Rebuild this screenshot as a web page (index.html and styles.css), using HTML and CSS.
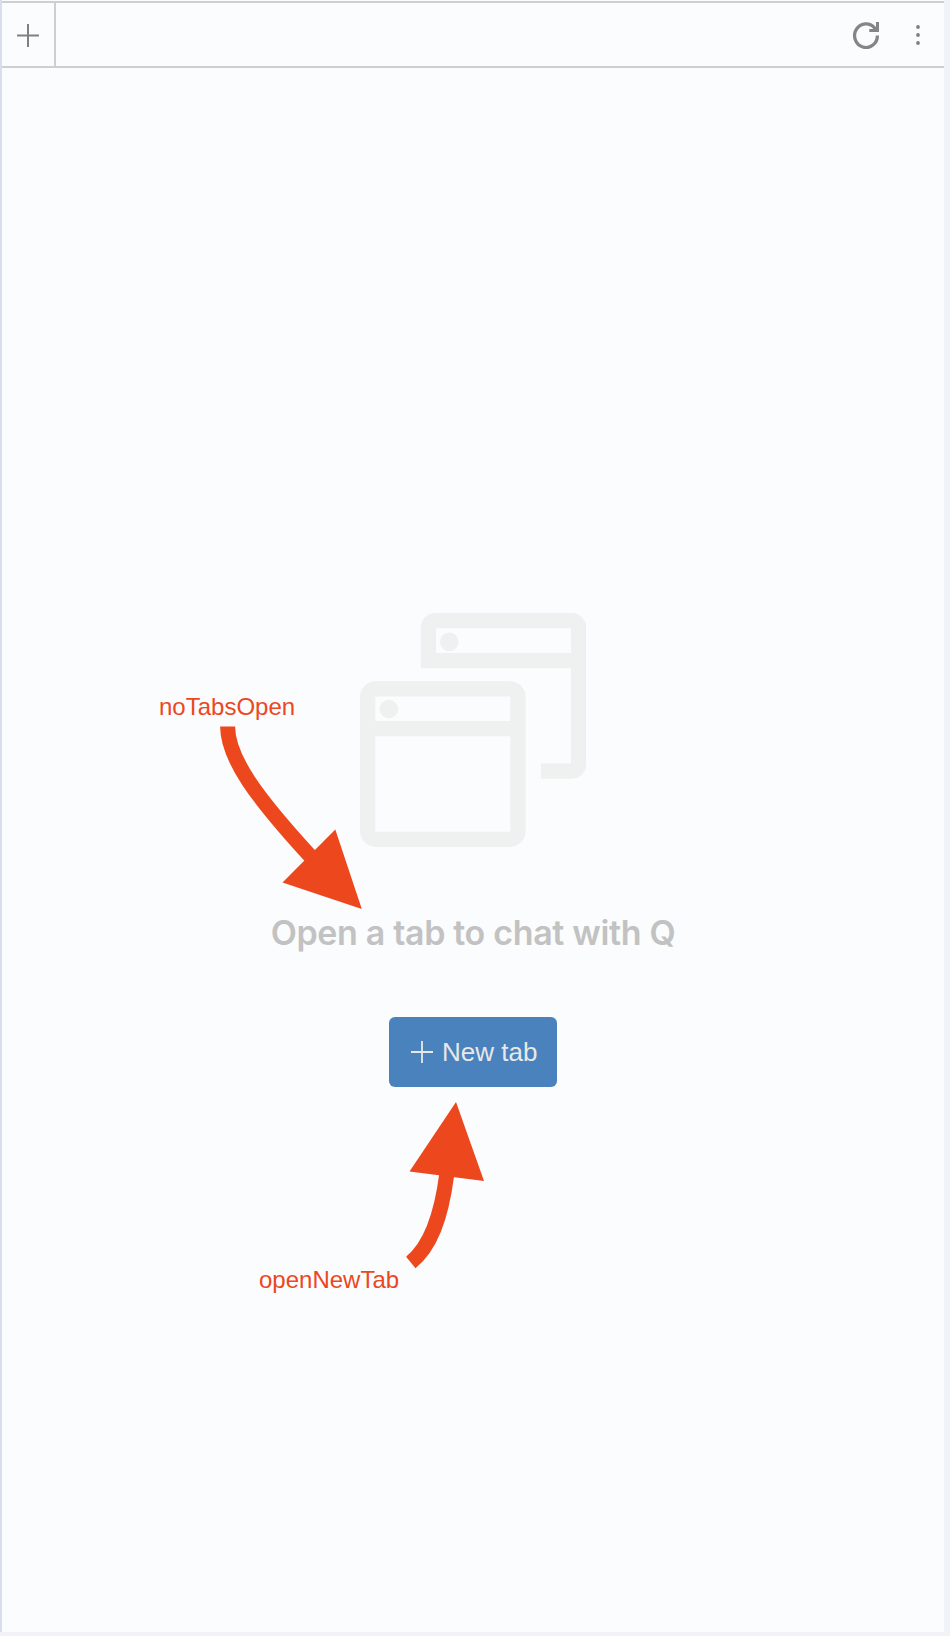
FILE: index.html
```html
<!DOCTYPE html>
<html lang="en">
<head>
<meta charset="utf-8">
<title>Chat</title>
<link rel="stylesheet" href="styles.css">
</head>
<body>
<div class="panel">
  <header class="tab-bar">
    <button class="add-tab" aria-label="New tab">
      <svg width="22" height="23" viewBox="0 0 22 23"><path d="M0 11.4H22M11 0V23" fill="none" stroke="#808080" stroke-width="2"/></svg>
    </button>
    <div class="tab-actions">
      <svg width="27" height="28" viewBox="0 0 27 28"><path d="M24.4 14.5A11.4 11.8 0 1 1 21.8 7.2L23.3 9" fill="none" stroke="#858585" stroke-width="3.3"/><path d="M23 1H26V11H16.3V8H20.5L23 6Z" fill="#858585"/></svg>
      <svg width="4" height="20" viewBox="0 0 4 20" fill="#808080"><circle cx="2" cy="2" r="1.9"/><circle cx="2" cy="10" r="1.9"/><circle cx="2" cy="18" r="1.9"/></svg>
    </div>
  </header>
  <main class="empty-state">
    <svg class="windows" width="226" height="234" viewBox="0 0 226 234">
      <g fill="none" stroke="#eef1f0" stroke-width="15.3">
        <path d="M68.4 55V15.6Q68.4 7.7 76.2 7.7H210.7Q218.7 7.7 218.7 15.7V150.2Q218.7 158.2 210.7 158.2H181M60.8 47.6H218"/>
        <rect x="7.7" y="75.8" width="150.3" height="150.5" rx="8"/>
        <path d="M8 115.7H158"/>
      </g>
      <g fill="#eef1f0"><circle cx="89.3" cy="28.8" r="9.3"/><circle cx="28.9" cy="96" r="9.3"/></g>
    </svg>
    <h1 class="message">Open a tab to chat with Q</h1>
    <button class="new-tab">
      <svg width="22" height="22" viewBox="0 0 22 22"><path d="M0 11H22M11 0V22" fill="none" stroke="#e6e8ea" stroke-width="1.8"/></svg>
      <span>New tab</span>
    </button>
  </main>
</div>
<div class="annotations">
  <span class="note note-message">noTabsOpen</span>
  <span class="note note-button">openNewTab</span>
  <svg width="950" height="1636" viewBox="0 0 950 1636">
    <g fill="none" stroke="#ed471d" stroke-width="15">
      <path d="M227.6 726.5C227.8 758 255 796 312 858"/>
      <path d="M410.8 1262.5C430 1247 441 1219 446.8 1174"/>
    </g>
    <g fill="#ed471d"><path d="M335.3 829.6L361.8 909L282.5 882.5Z"/><path d="M456 1102L484 1181L409.5 1171.5Z"/></g>
  </svg>
</div>
</body>
</html>
```
FILE: styles.css
```css
* { box-sizing: border-box; }
body {
  margin: 0;
  position: relative;
  height: 1636px;
  padding: 0 6px 4px 0;
  background: #f2f2f9;
  font-family: "Liberation Sans", Arial, sans-serif;
}
button { border: 0; background: none; padding: 0; font: inherit; }
svg { display: block; }
.panel {
  display: flex;
  flex-direction: column;
  height: 1632px;
  padding-top: 1px;
  border-left: 2px solid #d8deed;
  background: #fafcfe;
}
.tab-bar {
  display: flex;
  flex: none;
  justify-content: space-between;
  height: 67px;
  border-top: 2px solid #cecfd0;
  border-bottom: 2px solid #cecfd0;
}
.add-tab {
  width: 54px;
  padding: 2px 0 0 15px;
  border-right: 2px solid #cecfd0;
}
.tab-actions {
  display: flex;
  align-items: center;
  gap: 36px;
  padding: 1px 24px 0 0;
}
.empty-state {
  display: flex;
  flex: 1;
  flex-direction: column;
  align-items: center;
  padding-top: 545px;
}
.windows { flex: none; }
.message {
  margin: 65px 0 63px;
  font: 600 34px/42px Inter, sans-serif;
  letter-spacing: -0.34px;
  color: #c2c2c2;
  white-space: nowrap;
}
.new-tab {
  display: flex;
  align-items: center;
  gap: 9px;
  width: 168px;
  height: 70px;
  padding-left: 22px;
  border-radius: 6px;
  background: #4a82bd;
  color: #e8e8e8;
  font-size: 26px;
  white-space: nowrap;
}
.annotations { position: absolute; inset: 0; pointer-events: none; }
.note {
  position: absolute;
  color: #ed471d;
  font-size: 24px;
  line-height: 28px;
}
.note-message { left: 159px; top: 693px; }
.note-button { left: 259px; top: 1266px; }
```
